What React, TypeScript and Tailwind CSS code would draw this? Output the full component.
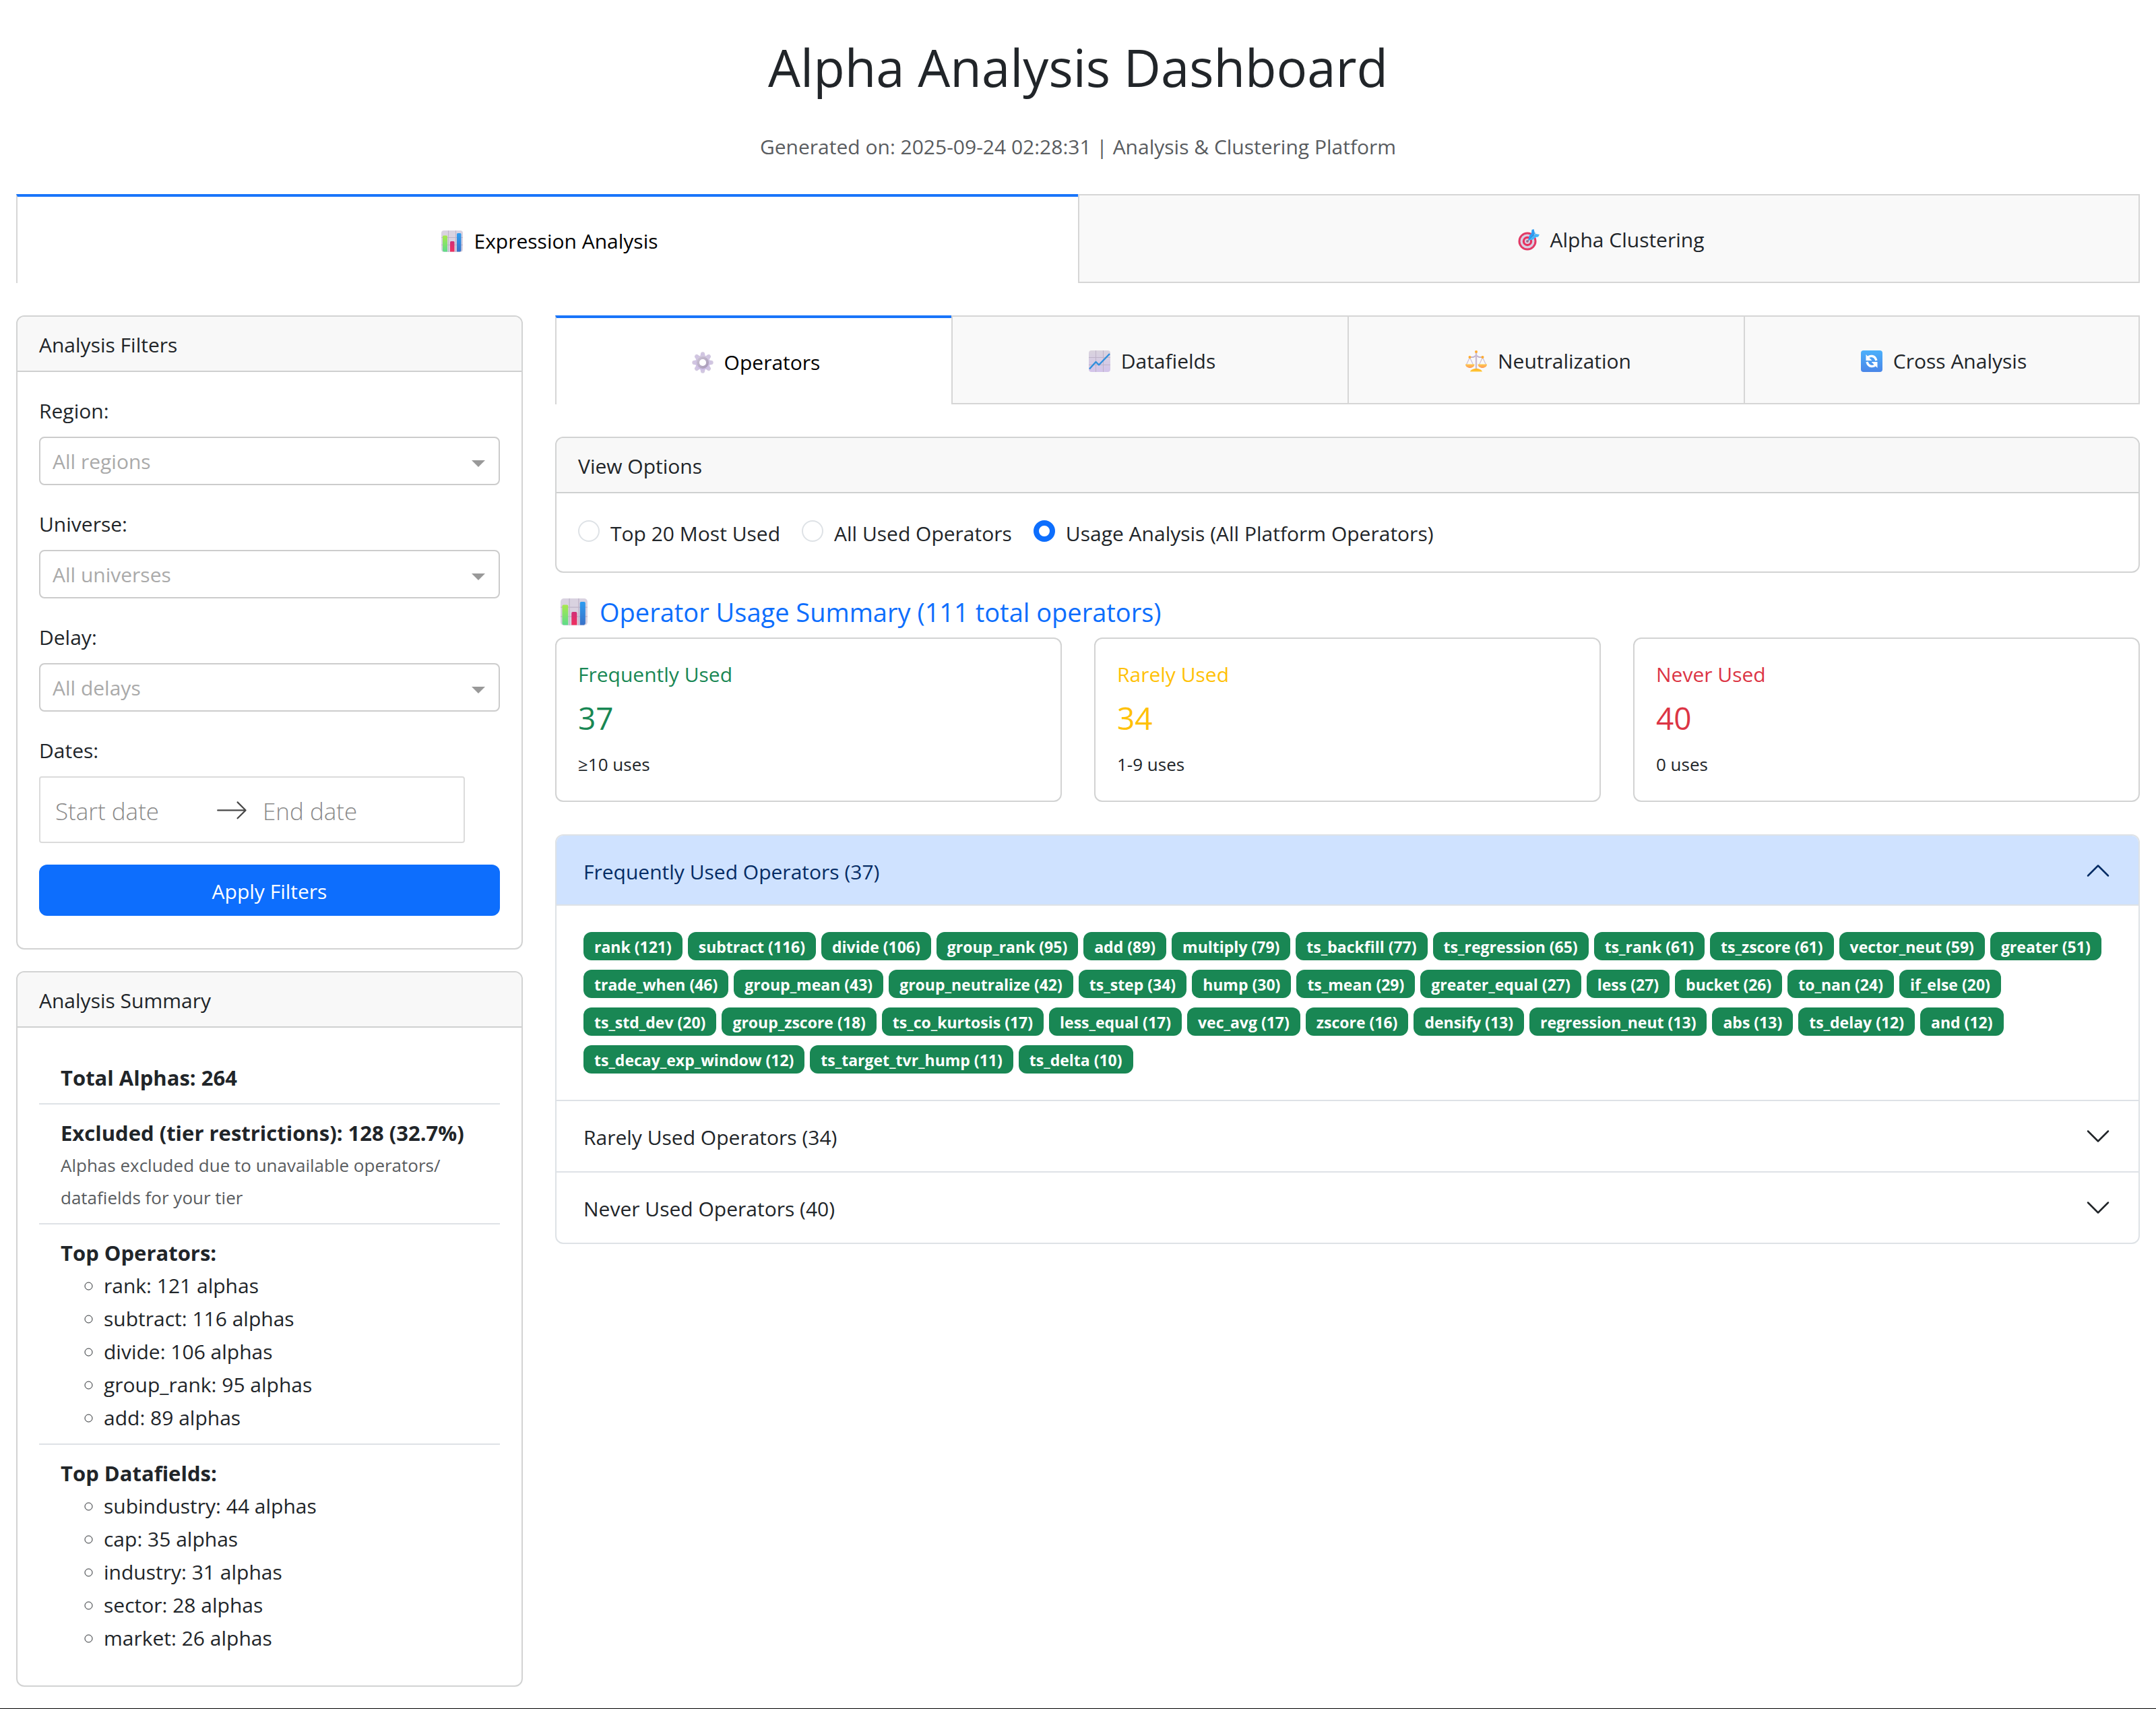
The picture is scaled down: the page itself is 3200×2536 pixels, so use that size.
import { useState } from "react";
import type { ReactNode } from "react";

type IconProps = { className?: string };

function BarChartIcon({ className }: IconProps) {
  return (
    <svg viewBox="0 0 32 32" className={className} aria-hidden="true">
      <defs>
        <linearGradient id="bar-green" x1="0" y1="0" x2="0" y2="1">
          <stop offset="0" stopColor="#a8e84c" />
          <stop offset="1" stopColor="#5fdc8a" />
        </linearGradient>
        <linearGradient id="bar-red" x1="0" y1="0" x2="0" y2="1">
          <stop offset="0" stopColor="#d02f78" />
          <stop offset="1" stopColor="#f0305f" />
        </linearGradient>
        <linearGradient id="bar-blue" x1="0" y1="0" x2="0" y2="1">
          <stop offset="0" stopColor="#2e9cf0" />
          <stop offset="1" stopColor="#3a72c8" />
        </linearGradient>
      </defs>
      <rect width="32" height="32" rx="4" fill="#d9d2e0" />
      <path d="M10.500 0v32M21.500 0v32M0 10.500h32M0 21.500h32" stroke="#beb3c8" strokeWidth="1" />
      <path d="M2 9a1.500 1.500 0 0 1 1.500-1.500h4A1.500 1.500 0 0 1 9 9v22.500H4a2 2 0 0 1-2-2z" fill="url(#bar-green)" />
      <path d="M13 17.500a1.500 1.500 0 0 1 1.500-1.500h3.500a1.500 1.500 0 0 1 1.500 1.500v14H13z" fill="url(#bar-red)" />
      <path d="M23 5.500A1.500 1.500 0 0 1 24.500 4H28a1.500 1.500 0 0 1 1.500 1.500v24.500l-1.500 1.500h-5z" fill="url(#bar-blue)" />
    </svg>
  );
}

function TargetIcon({ className }: IconProps) {
  return (
    <svg viewBox="0 0 32 32" className={className} aria-hidden="true">
      <circle cx="14" cy="18" r="13.500" fill="#e23a66" />
      <circle cx="14" cy="18" r="10.500" fill="#d9cfe2" />
      <circle cx="14" cy="18" r="7.200" fill="#e8325f" />
      <circle cx="14" cy="18" r="4" fill="#d9cfe2" />
      <circle cx="14" cy="18" r="1.800" fill="#a5476c" />
      <path d="M14 18l4-4" stroke="#7c8aa8" strokeWidth="1.600" strokeLinecap="round" />
      <path d="M15.500 16l1-6 3.500-4 .5-5 3-1 1.500 6-7 10z" fill="#2f9df2" />
      <path d="M16 16.500l6.500-1 4-3.500 3.500-.5 2-3.500-6-1-9 8z" fill="#45b4f7" />
      <path d="M17 15l9-9.500" stroke="#1f86dd" strokeWidth="1" />
    </svg>
  );
}

function GearIcon({ className }: IconProps) {
  const teeth = [0, 45, 90, 135, 180, 225, 270, 315];
  return (
    <svg viewBox="0 0 32 32" className={className} aria-hidden="true">
      <defs>
        <linearGradient id="gear-fill" x1="0" y1="0" x2="0" y2="1">
          <stop offset="0" stopColor="#d3cadf" />
          <stop offset="1" stopColor="#cdbde6" />
        </linearGradient>
        <linearGradient id="gear-ring" x1="0" y1="0" x2="1" y2="1">
          <stop offset="0" stopColor="#c9c0d2" />
          <stop offset="1" stopColor="#a99bb8" />
        </linearGradient>
      </defs>
      {teeth.map((angle) => (
        <path
          key={angle}
          d="M12 9l1-6.500A2.600 2.600 0 0 1 15.600.3h.8A2.600 2.600 0 0 1 19 2.500L20 9z"
          fill="url(#gear-fill)"
          transform={`rotate(${angle} 16 16)`}
        />
      ))}
      <circle cx="16" cy="16" r="10.800" fill="url(#gear-fill)" />
      <circle cx="16" cy="16" r="7" fill="none" stroke="url(#gear-ring)" strokeWidth="4" />
      <circle cx="16" cy="16" r="5" fill="#ffffff" />
    </svg>
  );
}

function LineChartIcon({ className }: IconProps) {
  return (
    <svg viewBox="0 0 32 32" className={className} aria-hidden="true">
      <defs>
        <linearGradient id="line-paper" x1="0" y1="0" x2="0" y2="1">
          <stop offset="0" stopColor="#d9d3dd" />
          <stop offset="1" stopColor="#d3c4ea" />
        </linearGradient>
      </defs>
      <rect width="32" height="32" rx="4" fill="url(#line-paper)" />
      <path d="M10.500 0v32M21.500 0v32M0 10.500h32M0 21.500h32" stroke="#beb3c8" strokeWidth="1" />
      <path d="M1 27.500L10.500 17l4.500 4.500L31 5" fill="none" stroke="#2f8fdc" strokeWidth="2.400" strokeLinejoin="round" />
    </svg>
  );
}

function ScaleIcon({ className }: IconProps) {
  return (
    <svg viewBox="0 0 32 32" className={className} aria-hidden="true">
      <defs>
        <linearGradient id="pan-fill" x1="0" y1="0" x2="0" y2="1">
          <stop offset="0" stopColor="#ffc94a" />
          <stop offset="1" stopColor="#ff9a5c" />
        </linearGradient>
        <linearGradient id="base-fill" x1="0" y1="0" x2="0" y2="1">
          <stop offset="0" stopColor="#ffb21e" />
          <stop offset="1" stopColor="#ffc93c" />
        </linearGradient>
      </defs>
      <path d="M6.500 10.500L1.500 21M6.500 10.500l5 10.500M25.500 10.500L20.500 21M25.500 10.500l5 10.500" stroke="#cdbfd6" strokeWidth="1.200" />
      <path d="M6 10h5c2.500 0 2.500-2 5-2s2.500 2 5 2h5" fill="none" stroke="#c2b3cc" strokeWidth="1.800" />
      <path d="M16 3v25" stroke="#c9bbd2" strokeWidth="2.400" />
      <circle cx="16" cy="2" r="2" fill="#ffab2e" />
      <circle cx="6.500" cy="10" r="2" fill="#ffab2e" />
      <circle cx="25.500" cy="10" r="2" fill="#ffab2e" />
      <path d="M0 20.500h13.500c0 3.200-3 5.500-6.750 5.500S0 23.700 0 20.500z" fill="url(#pan-fill)" />
      <path d="M18.500 20.500H32c0 3.200-3 5.500-6.750 5.500s-6.750-2.300-6.750-5.500z" fill="url(#pan-fill)" />
      <path d="M7 31.500c1-3 4.500-4.500 9-4.500s8 1.500 9 4.500z" fill="url(#base-fill)" />
    </svg>
  );
}

function CycleIcon({ className }: IconProps) {
  return (
    <svg viewBox="0 0 32 32" className={className} aria-hidden="true">
      <defs>
        <linearGradient id="cycle-fill" x1="0" y1="0" x2="0" y2="1">
          <stop offset="0" stopColor="#4bb0fb" />
          <stop offset="1" stopColor="#4a86e8" />
        </linearGradient>
      </defs>
      <rect width="32" height="32" rx="4" fill="url(#cycle-fill)" />
      <path d="M10 11C13 7.500 20.500 6.500 23 15" fill="none" stroke="#ffffff" strokeWidth="3.400" />
      <path d="M7.500 6v9h9z" fill="#ffffff" />
      <path d="M22 21C19 24.500 11.500 25.500 9 17" fill="none" stroke="#ffffff" strokeWidth="3.400" />
      <path d="M24.500 26v-9h-9z" fill="#ffffff" />
    </svg>
  );
}

function Chevron({ open }: { open: boolean }) {
  return (
    <svg
      viewBox="0 0 16 16"
      className={open ? "size-10 shrink-0 rotate-180" : "size-10 shrink-0"}
      fill="none"
      stroke="currentColor"
      strokeLinecap="round"
      strokeLinejoin="round"
      aria-hidden="true"
    >
      <path d="m2 5 6 6 6-6" />
    </svg>
  );
}

type Tab = { label: string; Icon: (props: IconProps) => ReactNode };

function TabBar({ tabs, name }: { tabs: Tab[]; name: string }) {
  const [active, setActive] = useState(0);
  return (
    <div role="tablist" aria-label={name} className="grid auto-cols-fr grid-flow-col">
      {tabs.map(({ label, Icon }, index) => (
        <button
          key={label}
          type="button"
          role="tab"
          aria-selected={index === active}
          onClick={() => setActive(index)}
          className={
            index === active
              ? "flex cursor-pointer items-start justify-center border-t-4 border-l-2 border-t-[#1975fa] border-l-[#d6d6d6] bg-white pt-[42px] pb-[38px] text-black last:border-r-2 last:border-r-[#d6d6d6]"
              : "flex cursor-pointer items-start justify-center border-y-2 border-l-2 border-[#d6d6d6] bg-[#f9f9f9] pt-[42px] pb-[38px] last:border-r-2"
          }
        >
          <Icon className="mx-1.5 mt-2 size-8" />
          <span className="ml-2.5">{label}</span>
        </button>
      ))}
    </div>
  );
}

function Card({ title, children }: { title: string; children: ReactNode }) {
  return (
    <section className="overflow-hidden rounded-xl border-2 border-[#d2d3d3] bg-white">
      <h2 className="border-b-2 border-[#cfd0d0] bg-[#f8f8f8] px-8 pt-[18px] pb-[14px]">{title}</h2>
      {children}
    </section>
  );
}

function FilterSelect({ id, label, placeholder }: { id: string; label: string; placeholder: string }) {
  return (
    <div className="mb-[34px]">
      <label htmlFor={id} className="mb-[14px] block">
        {label}
      </label>
      <div className="relative">
        <select
          id={id}
          defaultValue=""
          className="h-[72px] w-full appearance-none rounded-lg border-2 border-[#cccccc] bg-white px-[18px] pt-0.5 text-[#aaaaaa]"
        >
          <option value="">{placeholder}</option>
        </select>
        <svg
          viewBox="0 0 20 10"
          className="pointer-events-none absolute top-[35px] right-[22px] h-2.5 w-5 fill-[#999999]"
          aria-hidden="true"
        >
          <path d="M0 0h20L10 10z" />
        </svg>
      </div>
    </div>
  );
}

function Filters() {
  return (
    <Card title="Analysis Filters">
      <form className="px-8 pt-[34px] pb-12" onSubmit={(event) => event.preventDefault()}>
        <FilterSelect id="region" label="Region:" placeholder="All regions" />
        <FilterSelect id="universe" label="Universe:" placeholder="All universes" />
        <FilterSelect id="delay" label="Delay:" placeholder="All delays" />
        <label htmlFor="start-date" className="mb-[14px] block">
          Dates:
        </label>
        <div className="mb-8 flex h-[99px] w-fit items-center rounded-sm border-2 border-[#dbdbdb] pr-[60px]">
          <input
            id="start-date"
            type="text"
            placeholder="Start date"
            className="w-[260px] px-[22px] pt-1 text-[35px] leading-[48px] font-light placeholder:text-[#8a8a8a]"
          />
          <svg viewBox="0 0 1000 1000" className="size-12 shrink-0 fill-[#484848]" aria-hidden="true">
            <path d="M694 242l249 250c12 11 12 21 1 32L694 773c-5 5-10 7-16 7s-11-2-16-7c-11-11-11-21 0-32l210-210H68c-13 0-23-10-23-23s10-23 23-23h806L662 275c-21-22 11-54 32-33z" />
          </svg>
          <input
            type="text"
            aria-label="End date"
            placeholder="End date"
            className="w-[260px] px-[22px] pt-1 text-[35px] leading-[48px] font-light placeholder:text-[#8a8a8a]"
          />
        </div>
        <button type="submit" className="h-[76px] w-full cursor-pointer rounded-xl bg-[#0d6efd] pt-1 text-white">
          Apply Filters
        </button>
      </form>
    </Card>
  );
}

function RankedList({ title, items }: { title: string; items: string[] }) {
  return (
    <li className="px-8 pt-[18px] pb-[14px]">
      <strong className="block text-[31px] font-bold">{title}</strong>
      <ul className="list-[circle] pl-16 leading-[49px]">
        {items.map((item) => (
          <li key={item}>{item}</li>
        ))}
      </ul>
    </li>
  );
}

function Summary() {
  return (
    <Card title="Analysis Summary">
      <ul className="divide-y-2 divide-[#dee2e6] p-8">
        <li className="px-8 pt-[18px] pb-[14px]">
          <strong className="block text-[31px] font-bold">Total Alphas: 264</strong>
        </li>
        <li className="px-8 pt-[18px] pb-[14px]">
          <strong className="block text-[31px] font-bold">Excluded (tier restrictions): 128 (32.7%)</strong>
          <small className="block text-[26px] leading-[48px] text-[#595c5f]">
            Alphas excluded due to unavailable operators/<wbr />datafields for your tier
          </small>
        </li>
        <RankedList
          title="Top Operators:"
          items={[
            "rank: 121 alphas",
            "subtract: 116 alphas",
            "divide: 106 alphas",
            "group_rank: 95 alphas",
            "add: 89 alphas",
          ]}
        />
        <RankedList
          title="Top Datafields:"
          items={[
            "subindustry: 44 alphas",
            "cap: 35 alphas",
            "industry: 31 alphas",
            "sector: 28 alphas",
            "market: 26 alphas",
          ]}
        />
      </ul>
    </Card>
  );
}

const viewOptions = ["Top 20 Most Used", "All Used Operators", "Usage Analysis (All Platform Operators)"];

function ViewOptions() {
  const [selected, setSelected] = useState(viewOptions[2]);
  return (
    <Card title="View Options">
      <div className="flex flex-wrap gap-x-8 p-8">
        {viewOptions.map((option) => (
          <label key={option} className="flex cursor-pointer items-start gap-4">
            <input
              type="radio"
              name="view"
              checked={option === selected}
              onChange={() => setSelected(option)}
              className="mt-2 size-8 appearance-none rounded-full border-2 border-[#dee2e6] bg-white checked:border-8 checked:border-[#0d6efd]"
            />
            <span className="mt-1">{option}</span>
          </label>
        ))}
      </div>
    </Card>
  );
}

const stats = [
  { label: "Frequently Used", count: 37, note: "≥10 uses", color: "text-[#198754]" },
  { label: "Rarely Used", count: 34, note: "1-9 uses", color: "text-[#ffc107]" },
  { label: "Never Used", count: 40, note: "0 uses", color: "text-[#dc3545]" },
];

const frequentOperators = [
  "rank (121)", "subtract (116)", "divide (106)", "group_rank (95)", "add (89)", "multiply (79)",
  "ts_backfill (77)", "ts_regression (65)", "ts_rank (61)", "ts_zscore (61)", "vector_neut (59)",
  "greater (51)", "trade_when (46)", "group_mean (43)", "group_neutralize (42)", "ts_step (34)",
  "hump (30)", "ts_mean (29)", "greater_equal (27)", "less (27)", "bucket (26)", "to_nan (24)",
  "if_else (20)", "ts_std_dev (20)", "group_zscore (18)", "ts_co_kurtosis (17)", "less_equal (17)",
  "vec_avg (17)", "zscore (16)", "densify (13)", "regression_neut (13)", "abs (13)", "ts_delay (12)",
  "and (12)", "ts_decay_exp_window (12)", "ts_target_tvr_hump (11)", "ts_delta (10)",
];

const sections = [
  { title: "Frequently Used Operators (37)", operators: frequentOperators },
  { title: "Rarely Used Operators (34)", operators: [] },
  { title: "Never Used Operators (40)", operators: [] },
];

function OperatorAccordion() {
  const [openIndex, setOpenIndex] = useState(0);
  return (
    <div className="divide-y-2 divide-[#dee2e6] overflow-hidden rounded-xl border-2 border-[#dee2e6]">
      {sections.map(({ title, operators }, index) => {
        const open = index === openIndex;
        return (
          <div key={title}>
            <button
              type="button"
              aria-expanded={open}
              onClick={() => setOpenIndex(open ? -1 : index)}
              className={
                open
                  ? "flex w-full cursor-pointer items-start justify-between border-b-2 border-[#dee2e6] bg-[#cfe2ff] px-10 pt-8 pb-[26px] text-left leading-[44px] text-[#052c65]"
                  : "flex w-full cursor-pointer items-start justify-between px-10 pt-8 pb-7 text-left leading-[44px]"
              }
            >
              {title}
              <Chevron open={open} />
            </button>
            {open && operators.length > 0 && (
              <ul className="flex flex-wrap gap-x-2 gap-y-[14px] px-10 pt-[39px] pb-[39px]">
                {operators.map((operator) => (
                  <li
                    key={operator}
                    className="flex h-[42px] items-center rounded-xl bg-[#198754] px-4 pt-0.5 text-[23px] font-bold text-white"
                  >
                    {operator}
                  </li>
                ))}
              </ul>
            )}
          </div>
        );
      })}
    </div>
  );
}

export default function App() {
  return (
    <div className="min-h-screen border-b border-black bg-white px-6 pb-8 font-['Open_Sans','Noto_Sans',sans-serif] text-[30px] leading-[48px] text-[#212529]">
      <header className="text-center">
        <h1 className="pt-[52px] pb-[46px] text-[76px] leading-[96px]">Alpha Analysis Dashboard</h1>
        <p className="mb-[46px] text-[#595c5f]">
          Generated on: 2025-09-24 02:28:31 | Analysis &amp; Clustering Platform
        </p>
      </header>
      <TabBar
        name="Analysis mode"
        tabs={[
          { label: "Expression Analysis", Icon: BarChartIcon },
          { label: "Alpha Clustering", Icon: TargetIcon },
        ]}
      />
      <div className="mt-12 grid grid-cols-4 items-start gap-x-12">
        <aside className="flex flex-col gap-8">
          <Filters />
          <Summary />
        </aside>
        <main className="col-span-3">
          <TabBar
            name="Expression analysis"
            tabs={[
              { label: "Operators", Icon: GearIcon },
              { label: "Datafields", Icon: LineChartIcon },
              { label: "Neutralization", Icon: ScaleIcon },
              { label: "Cross Analysis", Icon: CycleIcon },
            ]}
          />
          <div className="mt-12">
            <ViewOptions />
          </div>
          <h2 className="mt-[34px] mb-[14px] flex items-center text-[38px] leading-[48px] text-[#0d6efd]">
            <BarChartIcon className="mx-2 size-10" />
            <span className="ml-2.5">Operator Usage Summary (111 total operators)</span>
          </h2>
          <div className="grid grid-cols-3 gap-12">
            {stats.map(({ label, count, note, color }) => (
              <section key={label} className="rounded-xl border-2 border-[#d2d3d3] px-8 pt-[34px] pb-[30px]">
                <h3 className={`mb-4 leading-[38px] ${color}`}>{label}</h3>
                <p className={`mb-4 text-[46px] leading-[58px] ${color}`}>{count}</p>
                <p className="text-[26px]">{note}</p>
              </section>
            ))}
          </div>
          <div className="mt-12">
            <OperatorAccordion />
          </div>
        </main>
      </div>
    </div>
  );
}
